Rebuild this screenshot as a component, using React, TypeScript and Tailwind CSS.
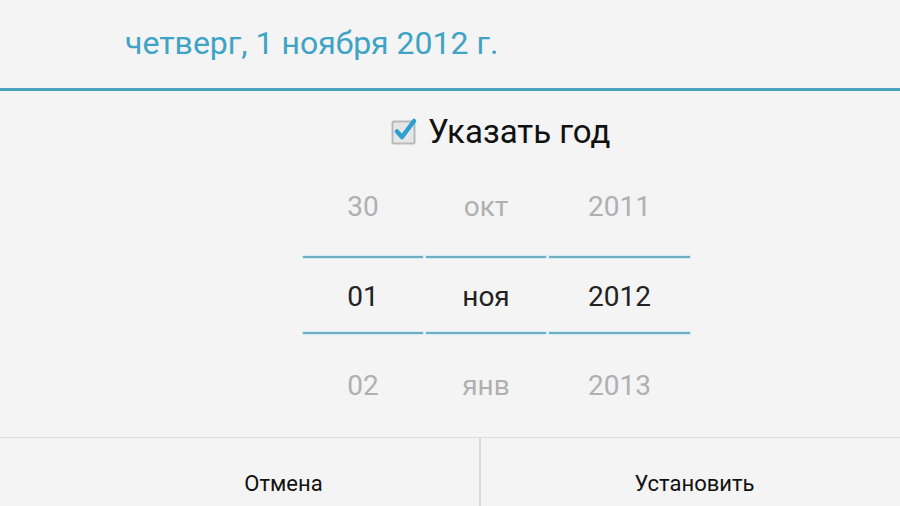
import React from 'react';

const columns = [
  { width: 'w-[120px]', prev: '30', cur: '01', next: '02' },
  { width: 'w-[120px]', prev: 'окт', cur: 'ноя', next: 'янв' },
  { width: 'w-[141px]', prev: '2011', cur: '2012', next: '2013' },
];

function CheckedBox() {
  return (
    <svg width="30" height="30" viewBox="0 0 30 30" className="shrink-0">
      <rect x="2.5" y="5.5" width="22" height="22" rx="1.5" fill="#e6e6e6" stroke="#b9b9b9" strokeWidth="2" />
      <path d="M7 15.5 L12 21 L24 5" fill="none" stroke="#2f9fd2" strokeWidth="4.5" strokeLinecap="round" strokeLinejoin="round" />
    </svg>
  );
}

function Line() {
  return <div className="h-[2px] w-full bg-[#6eadc2] shadow-[0_0_1px_1px_#d2eef6]" />;
}

export default function App() {
  return (
    <div className="w-[900px] h-[506px] bg-[#f4f4f4] flex flex-col overflow-hidden font-['Roboto',sans-serif]">
      {/* Header */}
      <div className="h-[88px] flex items-center pl-[125px] pb-[2px]">
        <span className="text-[32px] text-[#3ea3c4] leading-none">четверг, 1 ноября 2012 г.</span>
      </div>
      <div className="h-[3px] bg-[#4ca3bc]" />

      {/* Checkbox row */}
      <div className="h-[80px] flex items-center pl-[390px] gap-[8px]">
        <CheckedBox />
        <span className="text-[33px] text-[#111] leading-none">Указать год</span>
      </div>

      {/* Picker */}
      <div className="flex pl-[303px] gap-[3px]">
        {columns.map((c) => (
          <div key={c.cur} className={`${c.width} flex flex-col`}>
            <div className="h-[85px] flex items-center justify-center pb-[14px] text-[28px] text-[#b0b0b0] leading-none">
              {c.prev}
            </div>
            <Line />
            <div className="h-[74px] flex items-center justify-center pt-[4px] text-[28px] text-[#222] leading-none">
              {c.cur}
            </div>
            <Line />
            <div className="h-[103px] flex justify-center pt-[38px] text-[28px] text-[#b0b0b0] leading-none">
              {c.next}
            </div>
          </div>
        ))}
      </div>

      {/* Buttons */}
      <div className="flex-1 flex border-t border-[#dedede]">
        <button className="w-[481px] flex items-center justify-center pl-[88px] pt-[22px] text-[22px] text-[#111] border-r-2 border-[#dadada]">
          Отмена
        </button>
        <button className="flex-1 flex items-center justify-center pl-[8px] pt-[22px] text-[22px] text-[#111]">
          Установить
        </button>
      </div>
    </div>
  );
}
